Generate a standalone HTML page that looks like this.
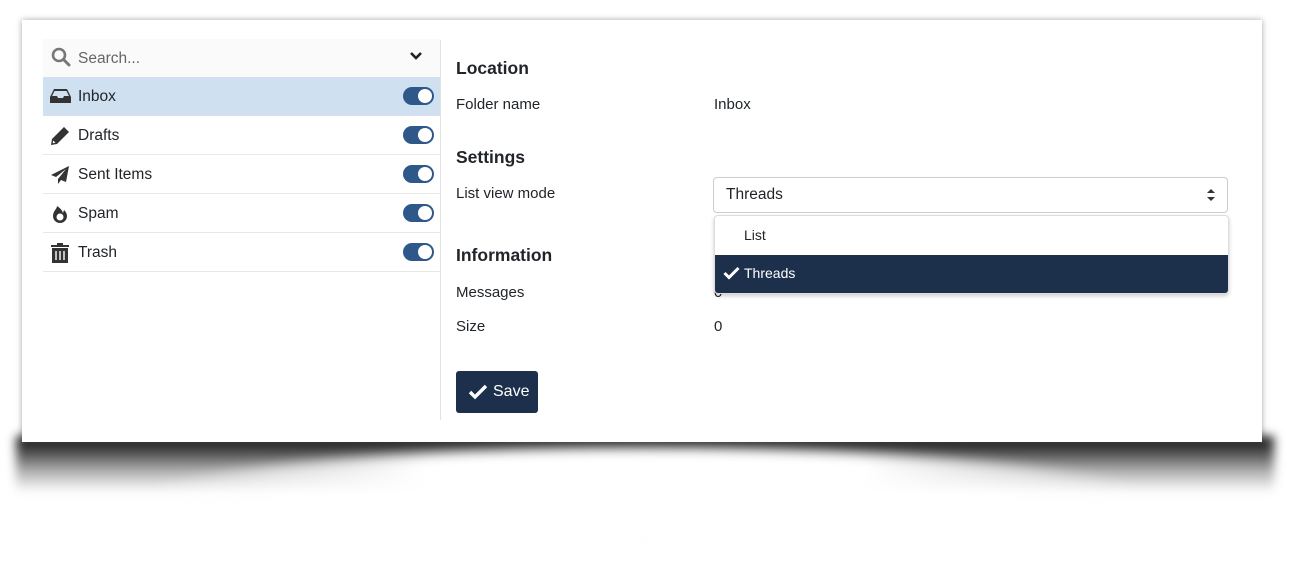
<!DOCTYPE html>
<html><head><style>
body{margin:0;width:1290px;height:494px;background:#fff;position:relative;overflow:hidden;font-family:"Liberation Sans",sans-serif;color:#212529}
.a{position:absolute}
.shadow{left:16px;top:436px;width:1258px;height:56px;background:linear-gradient(#111 0%,#444 25%,#aaa 60%,#fff 100%);filter:blur(5px)}
.sh2{left:120px;top:448px;width:1050px;height:120px;border-radius:50%;background:radial-gradient(ellipse at 50% 20%,#fff 30%,rgba(255,255,255,.6) 50%,rgba(255,255,255,0) 70%);filter:blur(6px)}
.card{left:22px;top:20px;width:1240px;height:422px;background:#fff;box-shadow:0 0 6px rgba(0,0,0,.35)}
.row{position:absolute;left:43px;width:397px;height:38px;border-bottom:1px solid #e8e8e8;font-size:15.5px}
.row span{position:absolute;left:35px;top:11px}
.row svg.i{position:absolute;left:7px;top:10px}
.tg{position:absolute;left:360px;top:10px;width:31px;height:18px;border-radius:9px;background:#2e578a}
.tg:after{content:"";position:absolute;right:2px;top:2px;width:14px;height:14px;border-radius:50%;background:#fff}
h3{margin:0;position:absolute;font-size:17.5px;font-weight:bold;left:456px}
.l{position:absolute;left:456px;font-size:15px}
.v{position:absolute;left:714px;font-size:15px}
</style></head><body>
<div class="a shadow"></div><div class="a sh2"></div>
<div class="a card"></div>
<div class="a" style="left:440px;top:40px;width:1px;height:380px;background:#e3e3e3"></div>
<div class="row" style="top:39px;background:#fafafa;height:38px;border-bottom:1px solid #eee">
<svg class="i" width="20" height="20" viewBox="0 0 20 20" style="left:8px;top:8px"><circle cx="8" cy="8" r="6" fill="none" stroke="#777" stroke-width="2.6"/><path d="M12.5 12.5L18 18" stroke="#777" stroke-width="3" stroke-linecap="round"/></svg>
<span style="color:#666;top:11px">Search...</span>
<svg class="a" style="left:366px;top:12px" width="14" height="10" viewBox="0 0 14 10"><path d="M2 2l5 5 5-5" fill="none" stroke="#222" stroke-width="2.6"/></svg>
</div>
<div class="row" style="top:77px;background:#cfe0f1;border-bottom:1px solid #dde">
<svg class="i" width="21" height="18" viewBox="0 0 21 18"><path d="M4 2h13l4 8v6H0v-6z" fill="#333"/><path d="M4.5 4h12l2.5 5h-5l-1 2h-5l-1-2H2z" fill="#cfe0f1"/></svg>
<span>Inbox</span><div class="tg"></div></div>
<div class="row" style="top:116px">
<svg class="i" width="20" height="20" viewBox="0 0 20 20"><path d="M14 1l5 5L7 18l-6 1 1-6z" fill="#333"/><path d="M3.2 14.5l2.3 2.3-2.8.5z" fill="#fff"/></svg>
<span>Drafts</span><div class="tg"></div></div>
<div class="row" style="top:155px">
<svg class="i" width="20" height="20" viewBox="0 0 20 20"><path d="M19 1L1 10l5 2 10-8-8 10v5l3-4 5 2z" fill="#333"/></svg>
<span>Sent Items</span><div class="tg"></div></div>
<div class="row" style="top:194px">
<svg class="i" width="20" height="20" viewBox="0 0 20 20" style="left:8px"><path d="M6 2c0 3-4 5-4 10a7 7 0 0014 0c0-3-2-5-3-6l-1 3c-1-3-3-5-6-7z" fill="#333"/><circle cx="9" cy="13" r="3.5" fill="#fff"/></svg>
<span>Spam</span><div class="tg"></div></div>
<div class="row" style="top:233px">
<svg class="i" width="18" height="20" viewBox="0 0 18 20" style="left:8px"><path d="M6 0h6v2h6v2H0V2h6z" fill="#333"/><path d="M1 5h16v15H1z" fill="#333"/><path d="M5 8v9M9 8v9M13 8v9" stroke="#fff" stroke-width="1.4"/></svg>
<span>Trash</span><div class="tg"></div></div>

<h3 style="top:58px">Location</h3>
<div class="l" style="top:96px">Folder name</div><div class="v" style="top:96px">Inbox</div>
<h3 style="top:147px">Settings</h3>
<div class="l" style="top:185px">List view mode</div>
<div class="a" style="left:713px;top:177px;width:513px;height:34px;border:1px solid #ccc;border-radius:4px;font-size:15.5px"><span class="a" style="left:12px;top:8px">Threads</span>
<svg class="a" style="left:492px;top:10px" width="10" height="14" viewBox="0 0 10 14"><path d="M1 5l4-4 4 4zM1 9l4 4 4-4z" fill="#333"/></svg></div>
<h3 style="top:245px">Information</h3>
<div class="l" style="top:284px">Messages</div><div class="v" style="top:284px">0</div>
<div class="l" style="top:318px">Size</div><div class="v" style="top:318px">0</div>
<div class="a" style="left:714px;top:215px;width:513px;height:77px;border:1px solid #ddd;border-radius:4px;background:#fff;box-shadow:0 2px 4px rgba(0,0,0,.2);overflow:hidden;font-size:14px">
<span class="a" style="left:29px;top:11px">List</span>
<div class="a" style="left:0;top:39px;width:513px;height:38px;background:#1c2f4b;color:#fff"><svg class="a" style="left:8px;top:11px" width="17" height="14" viewBox="0 0 17 14"><path d="M1.5 7l4.5 4.5L15.5 2" fill="none" stroke="#fff" stroke-width="3"/></svg><span class="a" style="left:29px;top:10px">Threads</span></div>
</div>
<div class="a" style="left:456px;top:371px;width:82px;height:42px;background:#1c2f4b;border-radius:3px;color:#fff;font-size:16px">
<svg class="a" style="left:12px;top:13px" width="20" height="16" viewBox="0 0 20 16"><path d="M2 8l5 5L18 2" fill="none" stroke="#fff" stroke-width="3.4"/></svg><span class="a" style="left:37px;top:12px">Save</span></div>
</body></html>
